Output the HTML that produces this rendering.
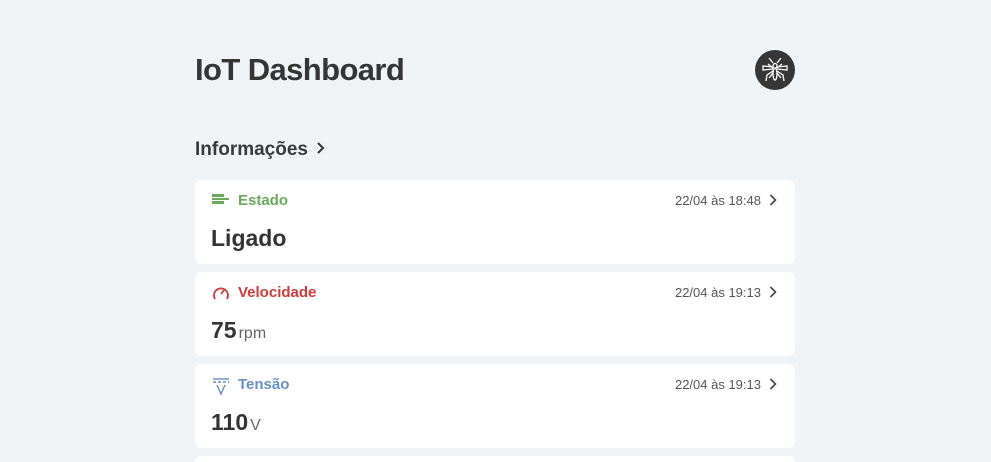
<!DOCTYPE html><html><head><meta charset="utf-8"><style>
html,body{margin:0;height:462px;overflow:hidden}
body{background:#f0f4f7;font-family:"Liberation Sans",sans-serif;color:#333;width:991px;position:relative}
h1{position:absolute;left:195px;top:52px;margin:0;font-size:31px;font-weight:bold;color:#353535;letter-spacing:-0.6px}
.logo{position:absolute;left:755px;top:50px;width:40px;height:40px;border-radius:50%;background:#363636}
.sec{position:absolute;left:195px;top:139px;font-size:19px;font-weight:bold;color:#3a3a3a}
.card{position:absolute;left:195px;width:600px;height:84px;background:#fff;border-radius:7px}
.t{position:absolute;left:43px;top:12px;font-size:15px;font-weight:bold}
.ic{position:absolute;left:17px;top:13px}
.d{position:absolute;right:34px;top:13px;font-size:13px;color:#555}
.ch{position:absolute;right:18px;top:14px}
.v{position:absolute;left:16px;top:45px;font-size:23px;font-weight:bold;color:#333}
.v span{font-size:16px;font-weight:normal;color:#666;margin-left:2px}
</style></head><body>
<h1>IoT Dashboard</h1>
<div class="logo"><svg width="40" height="40" viewBox="0 0 40 40" fill="none" stroke="#fff" stroke-width="1.3"><line x1="14" y1="8" x2="18" y2="13"/><line x1="26" y1="8" x2="22" y2="13"/><ellipse cx="20" cy="16" rx="2" ry="2.5"/><ellipse cx="20" cy="24" rx="2" ry="6"/><path d="M18 17 L8 16 L8 20 L18 19 M22 17 L32 16 L32 20 L22 19"/><path d="M18 21 L12 25 L11 31 M22 21 L28 25 L29 31 M18 23 L14 28 M22 23 L26 28 M18 18 L13 14 M22 18 L27 14"/></svg></div>
<div class="sec">Informações <svg width="12" height="14" viewBox="0 0 12 14" style="margin-left:2px"><path d="M3 2l5 5-5 5" stroke="#333" stroke-width="2" fill="none"/></svg></div>

<div class="card" style="top:180px"><svg class="ic" width="18" height="12" viewBox="0 0 18 12"><rect x="0" y="1" width="12" height="10" fill="#6aa85b"/><rect x="0" y="4" width="12" height="1" fill="#fff"/><rect x="0" y="7" width="12" height="1" fill="#fff"/><rect x="12" y="5" width="5" height="2" fill="#6aa85b"/></svg><div class="t" style="color:#6aa85b">Estado</div><div class="d">22/04 às 18:48</div><svg class="ch" width="8" height="12" viewBox="0 0 8 12"><path d="M1.5 1l5 5-5 5" stroke="#444" stroke-width="1.6" fill="none"/></svg><div class="v">Ligado</div></div>

<div class="card" style="top:272px"><svg class="ic" width="18" height="16" viewBox="0 0 18 16"><path d="M3 14A7 7 0 1 1 15 14" stroke="#d43a3a" stroke-width="1.8" fill="none"/><line x1="9" y1="9" x2="12" y2="5" stroke="#d43a3a" stroke-width="1.8"/></svg><div class="t" style="color:#d43a3a">Velocidade</div><div class="d">22/04 às 19:13</div><svg class="ch" width="8" height="12" viewBox="0 0 8 12"><path d="M1.5 1l5 5-5 5" stroke="#444" stroke-width="1.6" fill="none"/></svg><div class="v">75<span>rpm</span></div></div>

<div class="card" style="top:364px"><svg class="ic" width="18" height="18" viewBox="0 0 18 18"><line x1="1" y1="2" x2="17" y2="2" stroke="#6a8fc8" stroke-width="1.4"/><line x1="1" y1="5" x2="17" y2="5" stroke="#6a8fc8" stroke-width="1.4" stroke-dasharray="3 2"/><path d="M5 8l4 9 4-9" stroke="#6a8fc8" stroke-width="1.5" fill="none"/></svg><div class="t" style="color:#6a8fc8">Tensão</div><div class="d">22/04 às 19:13</div><svg class="ch" width="8" height="12" viewBox="0 0 8 12"><path d="M1.5 1l5 5-5 5" stroke="#444" stroke-width="1.6" fill="none"/></svg><div class="v">110<span>V</span></div></div>

<div class="card" style="top:456px;height:6px;border-radius:7px 7px 0 0"></div>
</body></html>
